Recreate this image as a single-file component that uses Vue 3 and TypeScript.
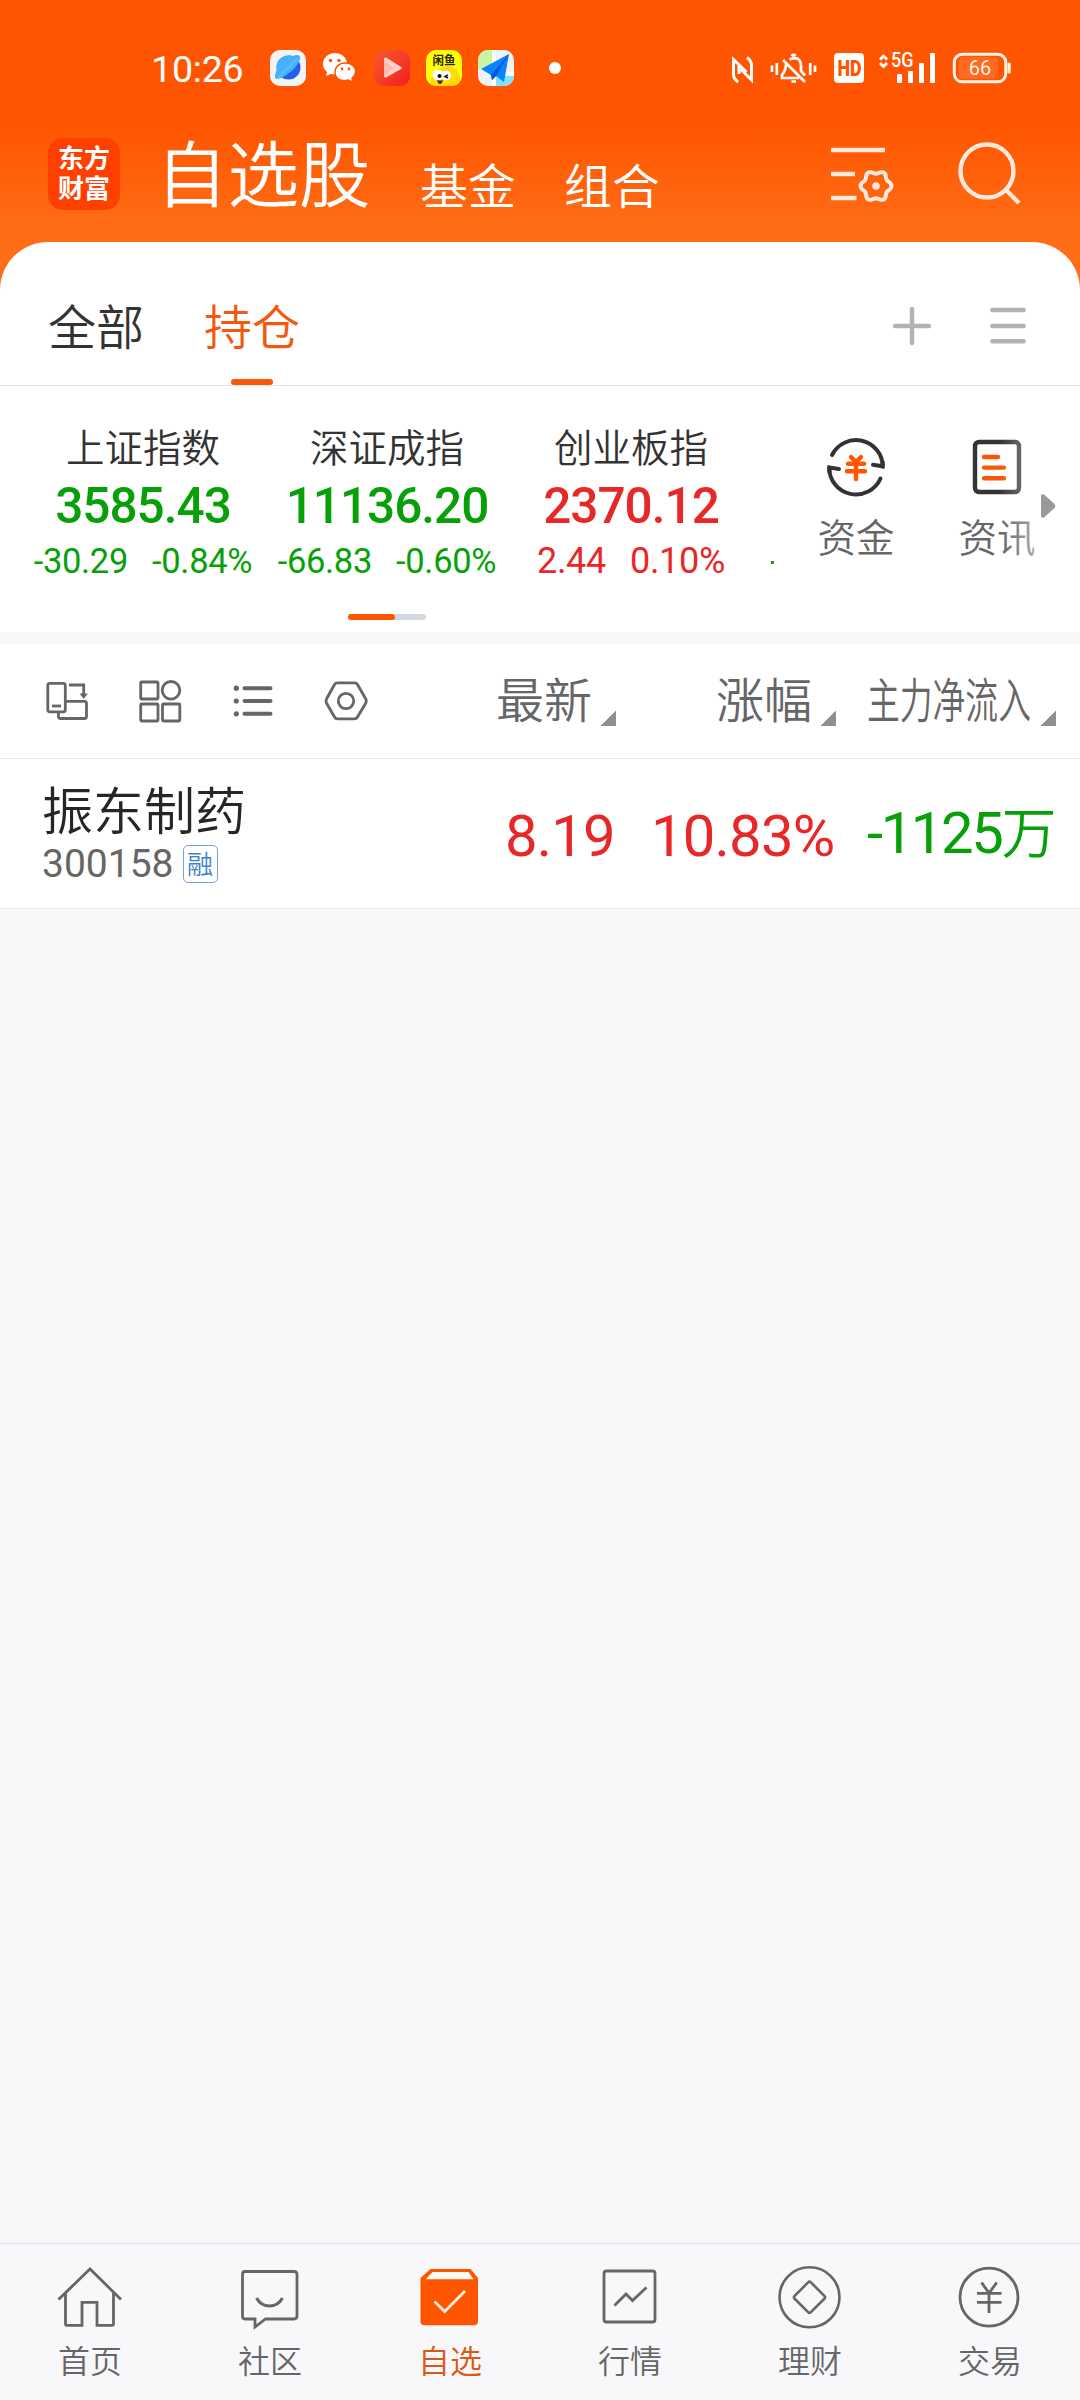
<script setup lang="ts">
interface Index {
  name: string
  price: string
  diff: string
  rate: string
  dir: 'up' | 'down'
}

interface Nav {
  key: string
  label: string
}

const indexes: Index[] = [
  { name: '上证指数', price: '3585.43', diff: '-30.29', rate: '-0.84%', dir: 'down' },
  { name: '深证成指', price: '11136.20', diff: '-66.83', rate: '-0.60%', dir: 'down' },
  { name: '创业板指', price: '2370.12', diff: '2.44', rate: '0.10%', dir: 'up' },
]

const navs: Nav[] = [
  { key: 'home', label: '首页' },
  { key: 'club', label: '社区' },
  { key: 'fav', label: '自选' },
  { key: 'market', label: '行情' },
  { key: 'wealth', label: '理财' },
  { key: 'trade', label: '交易' },
]

// Six-lobed gear outline sampled in polar coordinates
const gear: string = Array.from({ length: 72 }, (_, i) => {
  const t = (i * Math.PI) / 36
  const r = 13.9 + 1.6 * Math.cos(6 * t)
  return `${(876 + r * Math.cos(t)).toFixed(2)},${(186 + r * Math.sin(t)).toFixed(2)}`
}).join(' ')
</script>

<template>
  <div class="screen">
    <header class="header">
      <div class="status">
        <span class="clock">10:26</span>
        <svg class="app" width="36" height="36" viewBox="0 0 36 36">
          <rect width="36" height="36" rx="10" fill="#f1f3f6" />
          <circle cx="18.500" cy="17.500" r="12" fill="#2260e8" />
          <path d="M6 29C3 26 8 20 7 15C9 7 17 4 23 6C27 4 31 5 30 8C30 15 15 29 6 29Z" fill="#45b0fb" />
          <path d="M8 28L28 8" stroke="#6cc6fd" stroke-width="2" opacity=".6" />
        </svg>
        <svg class="app wechat" width="36" height="36" viewBox="0 0 36 36">
          <path d="M13 3C6 3 1 8 1 14c0 4 2 6 4 8l-1 4 5-2c9 2 16-3 16-10C25 8 20 3 13 3Z" fill="#fff" />
          <path d="M23 13c-6 0-10 4-10 9 0 6 5 10 13 8l5 2-1-4c7-6 3-15-7-15Z" fill="#fff" stroke="#ff5500" stroke-width="1.500" />
          <g fill="#ff5500"><circle cx="8.500" cy="10.500" r="1.700" /><circle cx="17" cy="10.500" r="1.700" /><circle cx="20" cy="19" r="1.400" /><circle cx="27" cy="19" r="1.400" /></g>
        </svg>
        <svg class="app" width="36" height="36" viewBox="0 0 36 36">
          <defs><linearGradient id="play" x1="0" y1="0" x2="1" y2="1"><stop offset="0" stop-color="#fa5b2c" /><stop offset="1" stop-color="#f21e22" /></linearGradient></defs>
          <rect width="36" height="36" rx="10" fill="url(#play)" />
          <path d="M12 7.500L28 17.500Q28.500 18 28 18.500L12 27.500Q10 28 10 26V9Q10 7 12 7.500Z" fill="#ffd3c9" />
          <path d="M10 10L19 18L10 27Z" fill="#ffb9ad" />
        </svg>
        <svg class="app" width="36" height="36" viewBox="0 0 36 36">
          <defs><clipPath id="fishclip"><rect width="36" height="36" rx="10" /></clipPath></defs>
          <g clip-path="url(#fishclip)">
            <rect width="36" height="36" fill="#ffff0b" />
            <path d="M5 36Q4 20 14 18Q25 12 32 22Q36 28 33 36Z" fill="#ffdc05" />
            <circle cx="12" cy="25" r="5.500" fill="#fff" /><circle cx="20" cy="25.500" r="5" fill="#fff" />
            <circle cx="13.500" cy="26" r="2" fill="#111" />
            <path d="M22 25l-3 1.500 3 1.500" stroke="#111" stroke-width="1.500" fill="none" />
            <path d="M11 30q4 1 6 0q-1 4-3 4t-3-4Z" fill="#421" />
          </g>
          <text x="6.500" y="15" class="fish" textLength="23" lengthAdjust="spacingAndGlyphs">闲鱼</text>
        </svg>
        <svg class="app" width="36" height="36" viewBox="0 0 36 36">
          <defs><clipPath id="mapclip"><rect width="36" height="36" rx="10" /></clipPath></defs>
          <g clip-path="url(#mapclip)">
            <rect width="36" height="36" fill="#eff2f8" />
            <path d="M0 0H14V14L0 20Z" fill="#c7f5a3" />
            <path d="M14 0h4v36h-4zM18 22h18v4H18z" fill="#fff" />
            <path d="M18 26H36V36H18Z" fill="#83e2fb" />
          </g>
          <path d="M31 4L3 19L13 25L14 30L18 26L26 32Z" fill="#0b83ff" />
          <path d="M31 4L13 25L14 30L18 26Z" fill="#0556d6" />
        </svg>
        <span class="dot"></span>
        <svg class="sys" width="300" height="44" viewBox="20 16 300 44">
          <g fill="none" stroke="#fff" stroke-width="3">
            <path d="M28 52Q23.500 49 23.500 44V29.500L36.500 42M37 27.500Q41.500 31 41.500 35V50L29 37.500V44" />
          </g>
          <g fill="none" stroke="#fff" stroke-width="2.700">
            <path d="M62 35.500V42M66.800 33V45M100.200 33V45M105 35.500V42" />
            <path d="M79.500 29.500Q90.500 25 91 36V41L95 45.500M76 34.500Q75.500 41 72 45V48H89M73 30L95 52" />
            <path d="M81.500 26Q83.500 24 85.500 26M81.500 51.500H86" />
          </g>
          <rect x="124" y="23" width="30" height="30" rx="4" fill="#fff" />
          <text x="127.500" y="45.500" class="hd" textLength="24" lengthAdjust="spacingAndGlyphs">HD</text>
          <path d="M170 29.500L173.500 26L177 29.500M170 33L173.500 36.500L177 33" fill="none" stroke="#fff" stroke-width="2.800" />
          <text x="181" y="37" class="g5" textLength="22.500" lengthAdjust="spacingAndGlyphs">5G</text>
          <g fill="#fff"><rect x="187" y="44" width="5" height="9" rx="1" /><rect x="198" y="41" width="5" height="12" rx="1" /><rect x="209" y="33" width="5" height="20" rx="1" /><rect x="220" y="23" width="5" height="30" rx="1" /></g>
          <rect x="249" y="27" width="39" height="22" rx="4" fill="#ff6a20" />
          <rect x="244.300" y="24.300" width="51.500" height="27.500" rx="8" fill="none" stroke="#fff5e8" stroke-width="3" />
          <rect x="297.500" y="32.500" width="3.200" height="11" rx="1.500" fill="#fff0e0" />
          <text x="270" y="45.300" text-anchor="middle" class="bat">66</text>
        </svg>
      </div>
      <div class="titles">
        <div class="logo">东方<br>财富</div>
        <h1>自选股</h1>
        <span class="sub">基金</span>
        <span class="sub">组合</span>
        <svg class="edit" width="64" height="60" viewBox="831 144 64 60" fill="none" stroke="#ffe9dc" stroke-width="4.400">
          <path d="M831 150H885M831 174H855M831 198H856.500" />
          <polygon :points="gear" stroke-linejoin="round" stroke-width="4" />
          <circle cx="876" cy="186" r="3.800" fill="#ffe9dc" stroke="none" />
        </svg>
        <svg class="search" width="64" height="68" viewBox="957 140 64 68" fill="none" stroke="#ffe9dc" stroke-width="4.400">
          <circle cx="987" cy="171" r="26.500" /><path d="M1005.500 189.500L1019 203" />
        </svg>
      </div>
    </header>

    <section class="panel">
      <div class="tabs">
        <span class="tab">全部</span>
        <span class="tab on">持仓</span>
        <svg class="tools" width="98" height="44" viewBox="890 303.500 98 44" fill="none" stroke="#b3b3b3" stroke-width="4.400" stroke-linecap="round">
          <path d="M895 325.500H929M912 308.500V342.500" />
        </svg>
        <svg class="burger" width="40" height="44" viewBox="988 303.500 40 44" fill="none" stroke="#b3b3b3" stroke-width="4.400" stroke-linecap="round">
          <path d="M992.300 309.500H1023.700M992.300 325.500H1023.700M992.300 340.700H1023.700" />
        </svg>
      </div>

      <div class="market">
        <div class="indexes">
          <div v-for="i in indexes" :key="i.name" class="index" :class="i.dir">
            <span class="iname">{{ i.name }}</span>
            <strong>{{ i.price }}</strong>
            <span class="chg"><span>{{ i.diff }}</span><span>{{ i.rate }}</span></span>
          </div>
          <span class="peek"></span>
        </div>
        <div class="entry fund">
          <svg width="64" height="64" viewBox="824 435 64 64" fill="none" stroke="#333" stroke-width="4">
            <path d="M832 455A26.800 26.800 0 0 1 882.800 466.500" stroke-linecap="round" />
            <path d="M882.600 462V466.300L873 464.800" stroke-linecap="round" />
            <path d="M880.500 478.500A26.800 26.800 0 0 1 829.200 467.500" stroke-linecap="round" />
            <path d="M829.400 472V467.500L839 469" stroke-linecap="round" />
            <g stroke="#ff5500" stroke-linecap="round" stroke-width="4.400"><path d="M851 457L856 462L861 457M848 463.700H864M847 471.300H865M856 463V479" /></g>
          </svg>
          <span>资金</span>
        </div>
        <div class="entry news">
          <svg width="56" height="64" viewBox="969 435 56 64" fill="none" stroke-width="4.400">
            <rect x="975" y="442" width="44" height="50" rx="4" stroke="#333" />
            <path d="M984 457H998M984 467.600H1004M984 478.200H1004" stroke="#fa5705" stroke-linecap="round" />
          </svg>
          <span>资讯</span>
          <i class="fade"></i>
        </div>
        <svg class="more" width="16" height="26" viewBox="0 0 16 26"><path d="M1 3Q1 .5 4 1.500L14.500 11Q16 13 14.500 15L4 24.500Q1 25.500 1 23Z" fill="#999" /></svg>
        <div class="pager"><i></i></div>
      </div>

      <div class="toolbar">
        <svg width="340" height="50" viewBox="40 676 340 50" fill="none" stroke="#666" stroke-width="2.800">
          <rect x="47.800" y="683.300" width="17.500" height="28.500" rx="2" /><path d="M52 706H61" />
          <path d="M66 701.300H84.500Q86.500 701.300 86.500 703.500V716.500Q86.500 718.500 84.500 718.500H60.500Q58.500 718.500 58.500 716.500V712M69 685H83.700V695" />
          <path d="M79.500 693.500H87.800L83.700 699Z" fill="#666" stroke="none" />
          <rect x="140.700" y="682" width="17.300" height="17" rx="1" /><circle cx="171" cy="690.300" r="8.800" />
          <rect x="140.700" y="704" width="17.300" height="17" rx="1" /><rect x="162.500" y="704" width="17.300" height="17" rx="1" />
          <path d="M244.500 688.200H270.500M244.500 701H270.500M244.500 713.800H270.500" stroke-width="4" stroke-linecap="round" />
          <g fill="#666" stroke="none"><circle cx="236.300" cy="688.200" r="2.600" /><circle cx="236.300" cy="701" r="2.600" /><circle cx="236.300" cy="713.800" r="2.600" /></g>
          <path d="M337.500 682.800H354.500Q356.500 682.800 357.500 684.500L365.800 699Q366.800 701 365.800 703L357.500 717Q356.500 718.800 354.500 718.800H337.500Q335.500 718.800 334.500 717L326.500 703Q325.500 701 326.500 699L334.500 684.500Q335.500 682.800 337.500 682.800Z" />
          <circle cx="346" cy="701" r="7.700" />
        </svg>
        <div class="col c1"><span>最新</span><i class="tri"></i></div>
        <div class="col c2"><span>涨幅</span><i class="tri"></i></div>
        <div class="col c3"><span class="narrow">主力净流入</span><i class="tri"></i></div>
      </div>

      <div class="stock">
        <div class="who">
          <span class="sname">振东制药</span>
          <span class="code">300158<em>融</em></span>
        </div>
        <span class="val last">8.19</span>
        <span class="val pct">10.83%</span>
        <span class="val flow">-1125<b>万</b></span>
      </div>
    </section>

    <div class="blank"></div>

    <nav class="nav">
      <div v-for="n in navs" :key="n.key" class="item" :class="{ active: n.key === 'fav' }">
        <svg width="80" height="80" viewBox="0 0 80 80" fill="none" stroke="#666" stroke-width="2.800">
          <template v-if="n.key === 'home'">
            <path d="M8.500 43.500L40 13L71 43.500M15.500 37V68Q15.500 69.300 17 69.300H32V46.300H47V69.300H62Q63.500 69.300 63.500 68V37" />
          </template>
          <template v-else-if="n.key === 'club'">
            <path d="M15 15.500H64Q67 15.500 67 18.500V60Q67 63 64 63H35.500L25 71V63H15Q12.500 63 12.500 60V18.500Q12.500 15.500 15 15.500Z" />
            <path d="M26.500 42Q31 50 39.500 50T52.500 42" stroke-width="3" />
          </template>
          <template v-else-if="n.key === 'fav'">
            <path d="M20.500 13H60.500L68 22V65Q68 69.300 64 69.300H14.500Q10.500 69.300 10.500 65V22Z" fill="#ff5500" stroke="none" />
            <path d="M22.500 16H58.500L63.500 23.300H15.500Z" fill="#fff9f4" stroke="none" />
            <path d="M24.500 45.500L34.700 55.500L55 35" stroke="#fff0e2" stroke-width="2.800" />
          </template>
          <template v-else-if="n.key === 'market'">
            <rect x="14" y="15" width="51" height="51" rx="2.500" />
            <path d="M24.500 49.500L36 38L42.500 44.500L56.500 31.500" />
          </template>
          <template v-else-if="n.key === 'wealth'">
            <circle cx="39.500" cy="41.300" r="30" stroke-width="2.600" />
            <rect x="28" y="29.800" width="23" height="23" rx="2" transform="rotate(45 39.500 41.300)" stroke-width="2.600" />
          </template>
          <template v-else>
            <circle cx="39" cy="41.200" r="29" />
            <path d="M31.500 26.500L39 37L46.800 26.500M27 37.300H51.500M27 46.300H51.500M39 37V57" />
          </template>
        </svg>
        <span>{{ n.label }}</span>
      </div>
    </nav>
  </div>
</template>

<style>
body { margin: 0; background: #f7f8fa; }
</style>

<style scoped>
.screen {
  width: 1080px;
  height: 2400px;
  display: flex;
  flex-direction: column;
  overflow: hidden;
  background: #f7f8fa;
  font-family: "Noto Sans CJK SC", sans-serif;
  font-weight: 350;
}
.header {
  height: 290px;
  flex: none;
  background: linear-gradient(#ff5500 123px, #ff6c15 225px, #ff6e19);
}
.status {
  height: 136px;
  display: flex;
  align-items: center;
  padding-left: 151px;
  box-sizing: border-box;
}
.clock {
  width: 119px;
  font: 400 37.500px/48px Roboto, sans-serif;
  color: #fff;
  letter-spacing: -0.200px;
  padding-top: 1px;
}
.app { margin-right: 16px; flex: none; }
.fish { font: 700 12px "Noto Sans CJK SC", sans-serif; fill: #262600; }
.dot { width: 12px; height: 12px; margin-left: 19px; border-radius: 50%; background: #fff; }
.sys { margin-left: 169px; }
.hd { font: 900 22px Roboto, sans-serif; fill: #ff5500; }
.g5 { font: 500 20px Roboto, sans-serif; fill: #fff; }
.bat { font: 400 20px Roboto, sans-serif; fill: #fff0e0; }
.titles {
  height: 76px;
  display: flex;
  align-items: center;
  padding-left: 48px;
  color: #fff;
}
.logo {
  width: 72px;
  height: 72px;
  padding-top: 4px;
  box-sizing: border-box;
  border-radius: 15px;
  background: #ff4000;
  text-align: center;
  font-weight: 700;
  font-size: 26px;
  line-height: 30px;
}
h1 {
  margin: 0 0 0 36px;
  width: 214px;
  font-size: 71.500px;
  font-weight: 350;
  line-height: 76px;
  white-space: nowrap;
  position: relative;
  top: -4px;
}
.sub { font-size: 48px; line-height: 60px; margin: 18px 0 0 50px; }
h1 + .sub { margin-left: 50px; }
.sub + .sub { margin-left: 48px; }
.edit { margin-left: 171px; }
.search { margin-left: 62px; }
.panel {
  margin-top: -48px;
  flex: none;
  background: #fff;
  border-radius: 48px 48px 0 0;
}
.tabs {
  height: 143px;
  display: flex;
  align-items: flex-start;
  padding-left: 48px;
  border-bottom: 1px solid #e4e4e4;
}
.tab {
  width: 96px;
  height: 143px;
  font-size: 48px;
  line-height: 165px;
  color: #333;
  margin-right: 60px;
}
.tab.on { color: #f4580c; position: relative; }
.tab.on::after {
  content: "";
  position: absolute;
  left: 27px;
  bottom: 0;
  width: 42px;
  height: 6px;
  border-radius: 3px;
  background: #fc5706;
}
.tools { margin: 61.500px 0 0 530px; flex: none; }
.burger { margin-top: 61.500px; }
.market { height: 246px; position: relative; display: flex; }
.indexes { width: 775px; height: 220px; display: flex; flex: none; padding-left: 21px; box-sizing: border-box; overflow: hidden; }
.index { width: 244px; flex: none; display: flex; flex-direction: column; align-items: center; }
.iname { font-size: 38.500px; line-height: 44px; margin-top: 37px; color: #333; }
.index strong { font: 500 49.500px/56px Roboto, sans-serif; letter-spacing: -1px; margin-top: 11px; }
.chg { display: flex; gap: 24px; font: 400 34.500px/40px Roboto, sans-serif; letter-spacing: -0.300px; margin-top: 7px; }
.down { color: #08a008; }
.up { color: #e82828; }
.up .chg { font-size: 36px; }
.peek { width: 3px; height: 3px; margin: 175px 0 0 18px; background: #1f921f; flex: none; }
.entry { width: 142px; display: flex; flex-direction: column; align-items: center; color: #666; font-size: 38.500px; line-height: 46px; }
.entry svg { margin-top: 49px; }
.entry span { margin-top: 13px; }
.fund { margin-left: 10px; }
.entry.news { position: relative; width: 140px; }
.fade { position: absolute; right: 31px; top: 40px; width: 36px; height: 150px; background: linear-gradient(90deg, rgba(255,255,255,0), rgba(255,255,255,.45)); }
.more { position: absolute; right: 24px; top: 107px; }
.pager { position: absolute; left: 348px; top: 228px; width: 78px; height: 6px; border-radius: 3px; background: #d3d7de; }
.pager i { display: block; width: 47px; height: 6px; border-radius: 3px; background: #ff5500; }
.toolbar {
  height: 114px;
  border-top: 12px solid #f6f7fa;
  border-bottom: 1px solid #ebebeb;
  display: flex;
  align-items: center;
  padding-left: 40px;
  color: #666;
  font-size: 48px;
}
.toolbar svg { flex: none; }
.col { display: flex; align-items: flex-end; justify-content: flex-end; height: 50px; line-height: 50px; }
.col span { position: relative; top: -4px; }
.c1 { width: 236px; }
.c2 { width: 220px; }
.c3 { width: 220px; }
.tri { width: 15px; height: 15px; margin-left: 9px; background: linear-gradient(135deg, transparent 50%, #8e8e93 50%); }
.narrow { width: 165px; white-space: nowrap; transform: scaleX(.683); transform-origin: 0 50%; }
.stock { height: 149px; display: flex; border-bottom: 1px solid #e8eaee; }
.who { width: 463px; padding-left: 42px; display: flex; flex-direction: column; box-sizing: content-box; }
.sname { font-size: 51px; line-height: 56px; margin-top: 21px; color: #262626; }
.code { display: flex; font: 400 39px/42px Roboto, sans-serif; color: #666; margin-top: 7px; }
.code em {
  width: 33px;
  height: 36px;
  margin: 2px 0 0 9px;
  border: 1.500px solid #77a5cf;
  border-radius: 5px;
  font: 350 26px/33px "Noto Sans CJK SC", sans-serif;
  text-align: center;
  color: #3f82c4;
}
.val { font: 400 58px/68px Roboto, sans-serif; letter-spacing: -0.800px; margin-top: 43px; color: #e82828; white-space: nowrap; }
.last { width: 146px; }
.pct { width: 216px; }
.flow { color: #08a008; margin-top: 40px; letter-spacing: -2.400px; }
.flow b { font: 350 55px/60px "Noto Sans CJK SC", sans-serif; }
.blank { flex: 1; }
.nav { height: 156px; flex: none; display: flex; border-top: 1px solid #dedfe2; background: #f8f8fb; }
.item { width: 180px; display: flex; flex-direction: column; align-items: center; font-size: 32px; line-height: 40px; color: #666; }
.item svg { margin-top: 12px; }
.item span { margin-top: 3px; }
.active { color: #dd5716; }
</style>
